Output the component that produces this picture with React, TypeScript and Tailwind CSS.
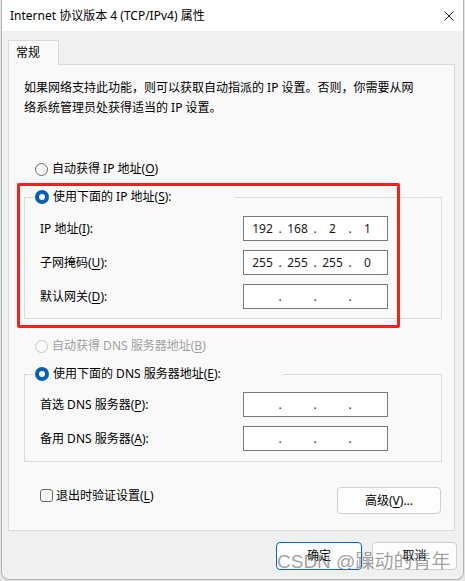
import { Fragment } from 'react';

const ui = "font-['Noto_Sans','Noto_Sans_CJK_SC',sans-serif]";

function Key({ k }: { k: string }) {
  return <span className="underline underline-offset-[2px] decoration-[1px]">{k}</span>;
}

function Radio({ checked, disabled }: { checked?: boolean; disabled?: boolean }) {
  if (checked) {
    return (
      <span className="w-[14px] h-[14px] rounded-full bg-[#005fb8] flex items-center justify-center shrink-0">
        <span className="w-[6px] h-[6px] rounded-full bg-white" />
      </span>
    );
  }
  return (
    <span
      className={`w-[13px] h-[13px] rounded-full border shrink-0 ${
        disabled ? 'border-[#c6c6c6] bg-[#fbfbfb]' : 'border-[#6a6a6a] bg-[#f6f6f6]'
      }`}
    />
  );
}

function IpField({ parts }: { parts: string[] }) {
  return (
    <div className="w-[145px] h-[25px] border border-[#7a7a7a] bg-white flex items-center pl-[3px] text-[12px] text-[#1a1a1a]">
      {parts.map((p, i) => (
        <Fragment key={i}>
          <span className="w-[31px] text-center">{p}</span>
          {i < 3 && <span className="w-[4px] flex justify-center">.</span>}
        </Fragment>
      ))}
    </div>
  );
}

function Row({ label, parts }: { label: React.ReactNode; parts: string[] }) {
  return (
    <div className="h-[25px] flex items-center justify-between pl-[15px] pr-[53px]">
      <span>{label}</span>
      <IpField parts={parts} />
    </div>
  );
}

const empty = ['', '', '', ''];

export default function App() {
  return (
    <div className={`${ui} relative w-[465px] h-[581px] bg-[#e6e6e6] pl-[1px] text-[12px] text-black overflow-hidden`}>
      <div className="w-[463px] h-[580px] bg-[#f0f0f0] border-x border-b border-[#b3b3b3] rounded-b-[8px] flex flex-col">
        {/* title bar */}
        <div className="h-[31px] bg-white flex items-center justify-between pl-[8px] pr-[9px] shrink-0">
          <span className="leading-none">Internet 协议版本 4 (TCP/IPv4) 属性</span>
          <svg width="10" height="10" viewBox="0 0 10 10" className="mt-[0px]">
            <path d="M0.5 0.5 L9.5 9.5 M9.5 0.5 L0.5 9.5" stroke="#1a1a1a" strokeWidth="1" />
          </svg>
        </div>

        <div className="pt-[9px] pl-[6px] pr-[8px]">
          <div className="relative z-10 -mb-px w-[51px] h-[25px] bg-[#f9f9f9] border border-b-0 border-[#dadada] pl-[7px] flex items-center">
            常规
          </div>
          <div className="h-[467px] w-[447px] bg-[#f9f9f9] border border-[#dadada] pl-[15px] pr-[12px]">
            <p className="mt-[13px] leading-[20px] pl-0">
              如果网络支持此功能，则可以获取自动指派的 IP 设置。否则，你需要从网
              <br />
              络系统管理员处获得适当的 IP 设置。
            </p>

            <div className="mt-[41px] h-[20px] flex items-center gap-[4px] pl-[11px]">
              <Radio />
              <span>
                自动获得 IP 地址(<Key k="O" />)
              </span>
            </div>

            <fieldset className="mt-[8px] w-[418px] border border-[#dcdcdc] pb-[9px]">
              <legend className="ml-[9px] w-[201px] h-[20px] pl-[1px] flex items-center gap-[4px]">
                <Radio checked />
                <span>
                  使用下面的 IP 地址(<Key k="S" />):
                </span>
              </legend>
              <div className="pt-[9px] flex flex-col gap-[9px]">
                <Row
                  label={
                    <>
                      IP 地址(<Key k="I" />):
                    </>
                  }
                  parts={['192', '168', '2', '1']}
                />
                <Row
                  label={
                    <>
                      子网掩码(<Key k="U" />):
                    </>
                  }
                  parts={['255', '255', '255', '0']}
                />
                <Row
                  label={
                    <>
                      默认网关(<Key k="D" />):
                    </>
                  }
                  parts={empty}
                />
              </div>
            </fieldset>

            <div className="mt-[17px] h-[20px] flex items-center gap-[4px] pl-[11px] text-[#a0a0a0]">
              <Radio disabled />
              <span>
                自动获得 DNS 服务器地址(<Key k="B" />)
              </span>
            </div>

            <fieldset className="mt-[8px] w-[418px] border border-[#dcdcdc] pb-[10px]">
              <legend className="ml-[9px] w-[249px] h-[20px] pl-[1px] flex items-center gap-[4px]">
                <Radio checked />
                <span>
                  使用下面的 DNS 服务器地址(<Key k="E" />):
                </span>
              </legend>
              <div className="pt-[8px] flex flex-col gap-[9px]">
                <Row
                  label={
                    <>
                      首选 DNS 服务器(<Key k="P" />):
                    </>
                  }
                  parts={empty}
                />
                <Row
                  label={
                    <>
                      备用 DNS 服务器(<Key k="A" />):
                    </>
                  }
                  parts={empty}
                />
              </div>
            </fieldset>

            <div className="mt-[25px] h-[27px] flex items-start justify-between pl-[16px] pr-[1px]">
              <div className="h-[17px] flex items-center gap-[3px]">
                <span className="w-[13px] h-[13px] rounded-[3px] border border-[#6a6a6a] bg-[#f6f6f6]" />
                <span>
                  退出时验证设置(<Key k="L" />)
                </span>
              </div>
              <button className="w-[104px] h-[27px] rounded-[4px] border border-[#d0d0d0] bg-[#fdfdfd] flex items-center justify-center">
                高级(<Key k="V" />)...
              </button>
            </div>
          </div>
        </div>

        <div className="mt-[11px] flex justify-end gap-[10px] pr-[6px]">
          <button className="w-[86px] h-[28px] rounded-[4px] border border-[#0067c0] bg-[#fdfdfd] flex items-center justify-center">
            确定
          </button>
          <button className="w-[85px] h-[28px] rounded-[4px] border border-[#d0d0d0] bg-[#fdfdfd] flex items-center justify-center">
            取消
          </button>
        </div>
      </div>

      {/* annotation overlay */}
      <div className="absolute left-[17px] top-[183px] w-[383px] h-[145px] border-[3px] border-[#f4211a] rounded-[2px] pointer-events-none" />

      {/* watermark */}
      <div className="absolute left-[277px] top-[552px] text-[19px] leading-none whitespace-nowrap text-[rgba(120,120,120,0.7)] font-['Liberation_Sans','Noto_Sans_CJK_SC',sans-serif] pointer-events-none">
        CSDN @躁动的青年
      </div>
    </div>
  );
}
